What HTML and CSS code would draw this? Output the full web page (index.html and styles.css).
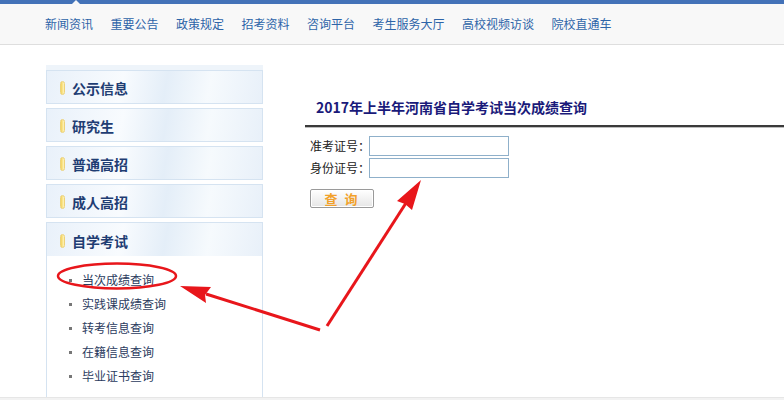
FILE: index.html
```html
<!DOCTYPE html>
<html lang="zh-CN">
<head>
    <meta charset="UTF-8">
    <title>2017年上半年河南省自学考试当次成绩查询</title>
    <link rel="stylesheet" href="styles.css">
</head>
<body>
    <div class="topbar"></div>

    <!-- Top navigation -->
    <div class="nav">
        <a href="#">新闻资讯</a>
        <a href="#">重要公告</a>
        <a href="#">政策规定</a>
        <a href="#">招考资料</a>
        <a href="#">咨询平台</a>
        <a href="#">考生服务大厅</a>
        <a href="#">高校视频访谈</a>
        <a href="#">院校直通车</a>
    </div>

    <div class="main">
        <!-- Sidebar -->
        <div class="sidebar">
            <div class="side-top"></div>
            <div class="side-head"><span class="pill"></span>公示信息</div>
            <div class="side-head"><span class="pill"></span>研究生</div>
            <div class="side-head"><span class="pill"></span>普通高招</div>
            <div class="side-head"><span class="pill"></span>成人高招</div>
            <div class="side-group">
                <div class="side-head open"><span class="pill"></span>自学考试</div>
                <ul class="side-list">
                    <li><a href="#">当次成绩查询</a></li>
                    <li><a href="#">实践课成绩查询</a></li>
                    <li><a href="#">转考信息查询</a></li>
                    <li><a href="#">在籍信息查询</a></li>
                    <li><a href="#">毕业证书查询</a></li>
                </ul>
            </div>
        </div>

        <!-- Query form -->
        <div class="content">
            <h3 class="title">2017年上半年河南省自学考试当次成绩查询</h3>
            <form class="query">
                <div class="row">
                    <label for="zkzh">准考证号：</label>
                    <input type="text" id="zkzh">
                </div>
                <div class="row">
                    <label for="sfzh">身份证号：</label>
                    <input type="text" id="sfzh">
                </div>
                <button type="button" class="btn">查 询</button>
            </form>
        </div>
    </div>

    <div class="footer"></div>

    <!-- Red annotations drawn over the screenshot -->
    <svg class="marks" width="784" height="400" viewBox="0 0 784 400">
        <ellipse cx="117" cy="276" rx="59" ry="12.5" fill="none" stroke="#e8161b" stroke-width="2.5"/>
        <line x1="320" y1="330" x2="206" y2="294" stroke="#e8161b" stroke-width="3"/>
        <polygon points="180,286 211,287 205,295 206,303" fill="#e8161b"/>
        <line x1="327" y1="326" x2="406" y2="203" stroke="#e8161b" stroke-width="3"/>
        <polygon points="421,180 412,210 405,204 397,201" fill="#e8161b"/>
    </svg>
</body>
</html>
```

FILE: styles.css
```css
body {
    margin: 0;
    font-family: "Noto Sans CJK SC", "Liberation Sans", sans-serif;
    font-size: 12px;
    color: #222;
    background-color: #fff;
    position: relative;
}
a {
    text-decoration: none;
}
.topbar {
    height: 4px;
    background-color: #4372b8;
    position: relative;
}
.topbar::after {
    content: "";
    position: absolute;
    left: 72px;
    bottom: 0;
    border-left: 4px solid transparent;
    border-right: 4px solid transparent;
    border-bottom: 4px solid #f8f8f8;
}
.nav {
    height: 40px;
    display: flex;
    align-items: center;
    padding-left: 45px;
    background-color: #f8f8f8;
    border-bottom: 1px solid #dedede;
}
.nav a {
    color: #2d64a8;
    line-height: 16px;
    margin-right: 17.5px;
}
.main {
    display: flex;
    align-items: flex-start;
}
.sidebar {
    width: 217px;
    margin-left: 46px;
    margin-top: 20px;
}
.side-top {
    height: 5px;
    background-color: #eef4fa;
}
.side-head {
    height: 34px;
    display: flex;
    align-items: center;
    padding: 2px 0 0 13px;
    margin-bottom: 4px;
    border: 1px solid #d5e3f1;
    background: linear-gradient(100deg, #e9f1fa 0%, #f8fbfe 35%, #e4eef8 55%, #f6fafd 75%, #e8f0f9 100%);
    color: #1f3d73;
    font-size: 14px;
    font-weight: bold;
    line-height: 20px;
    box-sizing: border-box;
}
.pill {
    flex-shrink: 0;
    width: 5px;
    height: 14px;
    margin-right: 7px;
    border-radius: 3px;
    background: linear-gradient(90deg, #f3d35c, #fff4bd);
    border: 1px solid #ecd27a;
    box-sizing: border-box;
}
.side-group {
    border-left: 1px solid #d5e3f1;
    border-right: 1px solid #d5e3f1;
}
.side-head.open {
    margin-bottom: 0;
    border-left: none;
    border-right: none;
    border-bottom: none;
}
.side-list {
    list-style: none;
    margin: 0;
    padding: 12px 0 9px 22px;
    background-color: #fff;
}
.side-list li {
    display: flex;
    align-items: center;
    line-height: 24px;
}
.side-list li::before {
    content: "";
    width: 3px;
    height: 3px;
    margin-right: 10px;
    background-color: #777;
}
.side-list a {
    color: #2b3b5e;
}
.content {
    flex: 1;
    margin-left: 42px;
    margin-top: 52px;
}
.title {
    margin: 0;
    padding: 0 0 8px 11px;
    font-size: 14px;
    line-height: 20px;
    color: #1a1a7a;
    border-bottom: 2px solid #3a3a3a;
    box-shadow: 0 1px 0 #bdbdbd;
}
.query {
    padding: 9px 0 0 5px;
}
.row {
    display: flex;
    align-items: center;
    height: 20px;
    margin-bottom: 2px;
}
.row label {
    flex-shrink: 0;
    width: 59px;
    white-space: nowrap;
    line-height: 20px;
}
.row input {
    width: 140px;
    height: 20px;
    margin: 0;
    padding: 0 3px;
    border: 1px solid #8fb0ca;
    box-sizing: border-box;
}
.btn {
    display: block;
    width: 64px;
    height: 19px;
    margin-top: 11px;
    padding: 0;
    border: 1px solid #9a9a9a;
    border-radius: 2px;
    background: linear-gradient(#ffffff, #e6e6e6);
    box-shadow: inset 0 0 0 1px #fff;
    color: #f2a12a;
    font-family: "Noto Sans CJK SC", sans-serif;
    font-size: 13px;
    font-weight: bold;
    line-height: 17px;
    letter-spacing: 2px;
    cursor: pointer;
}
.footer {
    height: 10px;
    background-color: #f2f2f2;
    border-top: 1px solid #e6e6e6;
}
.marks {
    position: absolute;
    left: 0;
    top: 0;
    pointer-events: none;
}
```
